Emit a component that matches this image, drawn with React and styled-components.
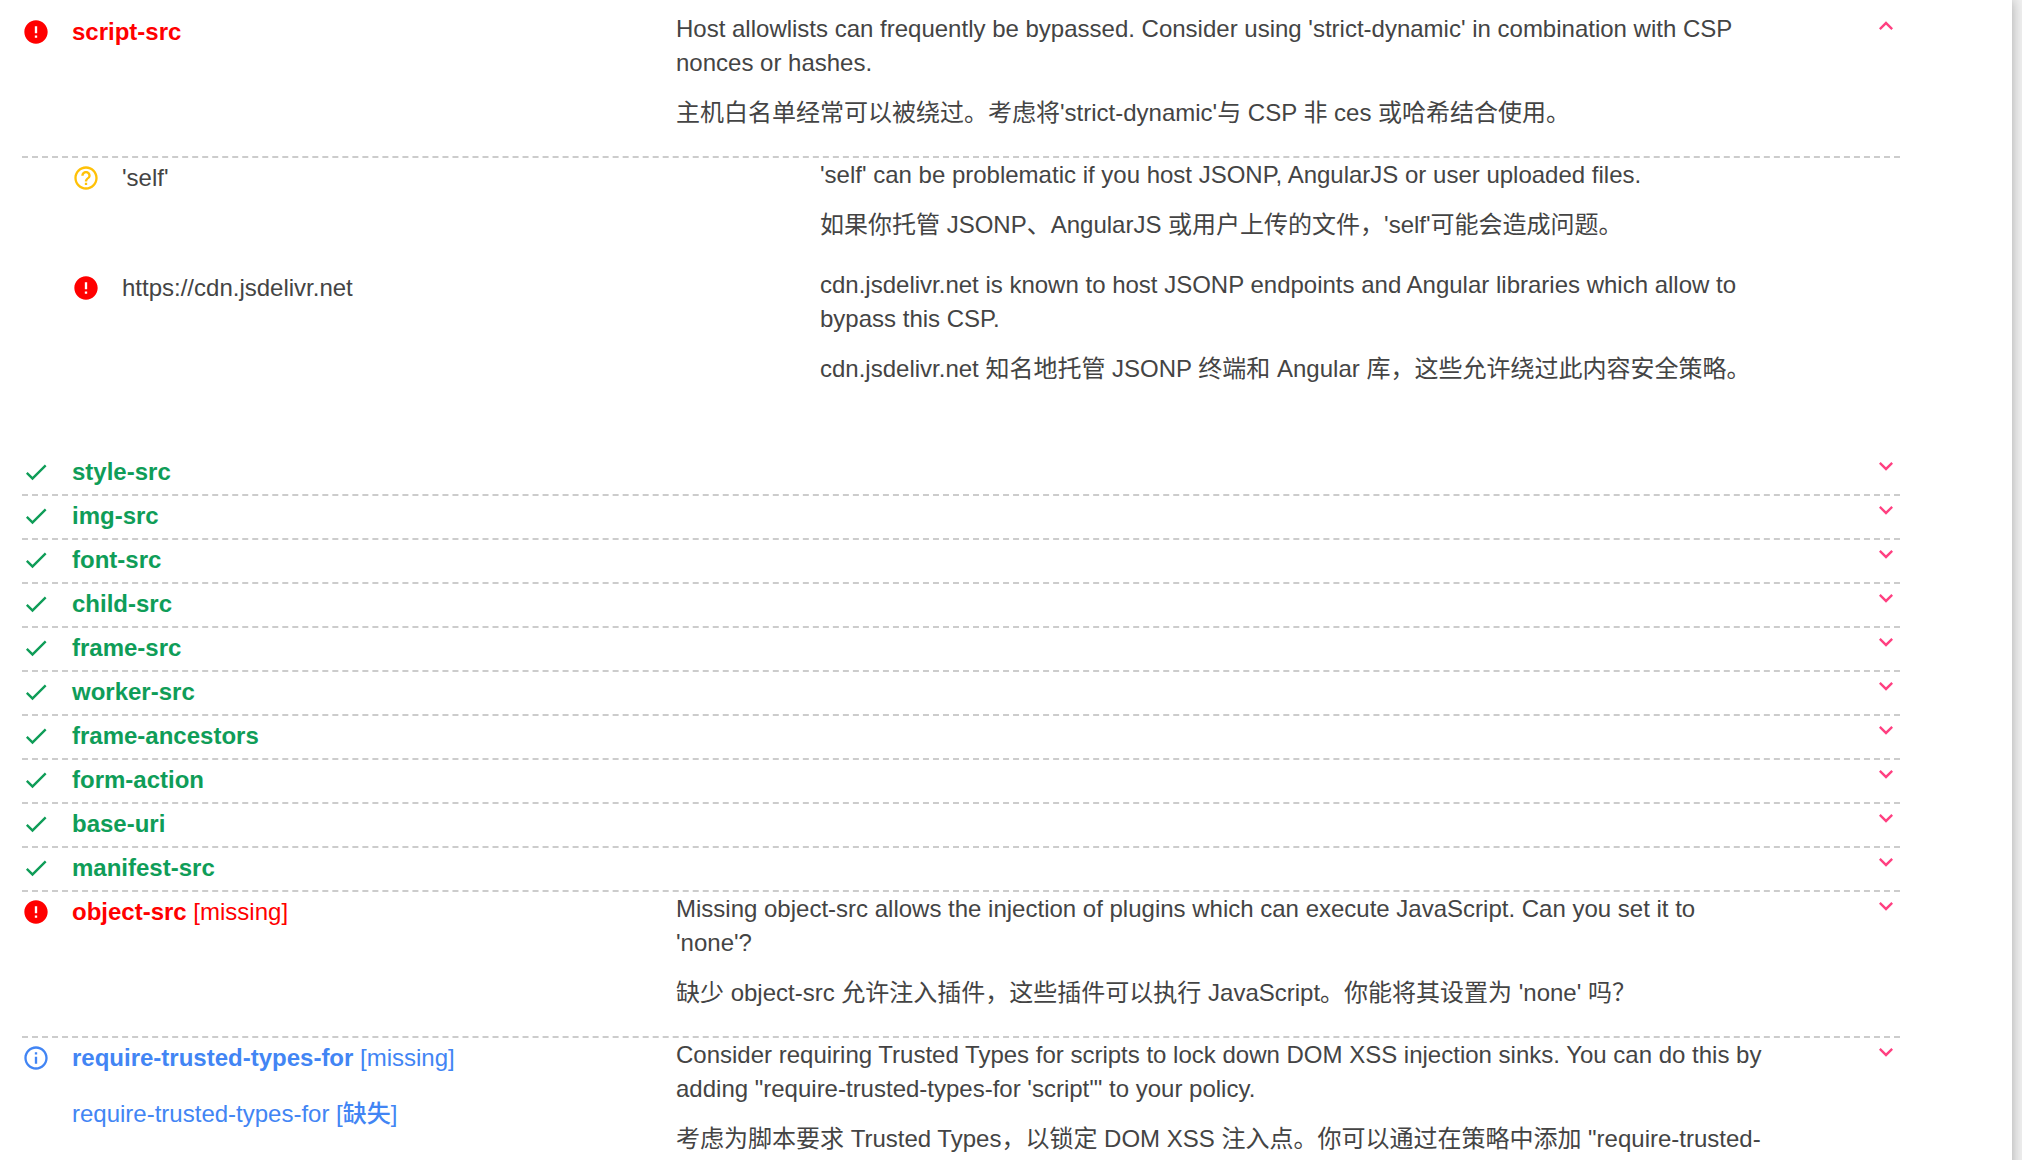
import React, { useState } from "react";
import styled, { createGlobalStyle } from "styled-components";
import {
  MdCheck,
  MdError,
  MdExpandLess,
  MdExpandMore,
  MdHelpOutline,
  MdInfoOutline,
} from "react-icons/md";

const GlobalStyle = createGlobalStyle`
  *, *::before, *::after { box-sizing: border-box; }
  html { scrollbar-width: none; }
  body {
    margin: 0;
    background: #f0f0f0;
    color: #444;
    font: 24px/34px "Liberation Sans", "Noto Sans CJK SC", sans-serif;
  }
`;

const Sheet = styled.main`
  min-height: 100vh;
  margin-right: 10px;
  padding: 12px 112px 0 22px;
  background: #fff;
  box-shadow: 0 0 12px rgba(0, 0, 0, 0.3);
`;

const List = styled.ul`
  margin: 0;
  padding: 0;
  list-style: none;
`;

const Directive = styled.li`
  display: grid;
  grid-template-columns: 654fr 1094fr 130fr;
  align-items: start;
  min-height: 44px;
  border-bottom: 2px dashed #ccc;
`;

const Details = styled(List)`
  padding: 0 0 40px 50px;
`;

const Value = styled.li`
  display: grid;
  grid-template-columns: 748fr 950fr 130fr;
  align-items: start;
`;

const tones = {
  high: "#f00",
  maybe: "#ffc107",
  ok: "#0f9d58",
  info: "#4285f4",
};

const NameCell = styled.div`
  display: flex;
  gap: 22px;
  padding-top: 3px;
  color: ${(p) => (p.$tone ? tones[p.$tone] : "inherit")};
`;

const StatusIcon = styled.span`
  display: flex;
  flex: none;
  padding-top: 3px;
  color: ${(p) => tones[p.$tone]};

  svg {
    width: 28px;
    height: 28px;
  }
`;

const Name = styled.div`
  font-weight: 400;
`;

const Translation = styled.p`
  margin: ${(p) => (p.$roomy ? "22px 0 0" : "16px 0 26px")};
  font-weight: ${(p) => (p.$roomy ? 500 : 400)};
`;

const Description = styled.div`
  grid-column: 2;
`;

const Toggle = styled.button`
  grid-column: 3;
  justify-self: end;
  display: flex;
  padding: 0;
  border: 0;
  background: none;
  color: #ff4081;
  cursor: pointer;

  svg {
    width: 28px;
    height: 28px;
  }
`;

const icons = {
  high: MdError,
  maybe: MdHelpOutline,
  ok: MdCheck,
  info: MdInfoOutline,
};

const findings = [
  {
    name: "script-src",
    tone: "high",
    text: "Host allowlists can frequently be bypassed. Consider using 'strict-dynamic' in combination with CSP nonces or hashes.",
    translation:
      "主机白名单经常可以被绕过。考虑将'strict-dynamic'与 CSP 非 ces 或哈希结合使用。",
    values: [
      {
        name: "'self'",
        tone: "maybe",
        text: "'self' can be problematic if you host JSONP, AngularJS or user uploaded files.",
        translation:
          "如果你托管 JSONP、AngularJS 或用户上传的文件，'self'可能会造成问题。",
      },
      {
        name: "https://cdn.jsdelivr.net",
        tone: "high",
        text: "cdn.jsdelivr.net is known to host JSONP endpoints and Angular libraries which allow to bypass this CSP.",
        translation:
          "cdn.jsdelivr.net 知名地托管 JSONP 终端和 Angular 库，这些允许绕过此内容安全策略。",
      },
    ],
  },
  { name: "style-src", tone: "ok" },
  { name: "img-src", tone: "ok" },
  { name: "font-src", tone: "ok" },
  { name: "child-src", tone: "ok" },
  { name: "frame-src", tone: "ok" },
  { name: "worker-src", tone: "ok" },
  { name: "frame-ancestors", tone: "ok" },
  { name: "form-action", tone: "ok" },
  { name: "base-uri", tone: "ok" },
  { name: "manifest-src", tone: "ok" },
  {
    name: "object-src",
    tone: "high",
    missing: true,
    text: "Missing object-src allows the injection of plugins which can execute JavaScript. Can you set it to 'none'?",
    translation:
      "缺少 object-src 允许注入插件，这些插件可以执行 JavaScript。你能将其设置为 'none' 吗？",
  },
  {
    name: "require-trusted-types-for",
    tone: "info",
    missing: true,
    nameTranslation: "require-trusted-types-for [缺失]",
    text: "Consider requiring Trusted Types for scripts to lock down DOM XSS injection sinks. You can do this by adding \"require-trusted-types-for 'script'\" to your policy.",
    translation:
      "考虑为脚本要求 Trusted Types，以锁定 DOM XSS 注入点。你可以通过在策略中添加 \"require-trusted-",
  },
];

function Status({ tone }) {
  const Icon = icons[tone];
  return (
    <StatusIcon $tone={tone}>
      <Icon aria-hidden="true" />
    </StatusIcon>
  );
}

function Explanation({ text, translation }) {
  if (!text) return null;
  return (
    <Description>
      {text}
      <Translation lang="zh-CN">{translation}</Translation>
    </Description>
  );
}

function Finding({ item }) {
  const [open, setOpen] = useState(Boolean(item.values));
  return (
    <>
      <Directive>
        <NameCell $tone={item.tone}>
          <Status tone={item.tone} />
          <Name>
            <strong>{item.name}</strong>
            {item.missing && " [missing]"}
            {item.nameTranslation && (
              <Translation $roomy lang="zh-CN">
                {item.nameTranslation}
              </Translation>
            )}
          </Name>
        </NameCell>
        <Explanation text={item.text} translation={item.translation} />
        <Toggle
          type="button"
          aria-label={`Toggle ${item.name}`}
          aria-expanded={open}
          onClick={() => setOpen(!open)}
        >
          {open ? <MdExpandLess /> : <MdExpandMore />}
        </Toggle>
      </Directive>
      {open && item.values && (
        <li>
          <Details>
            {item.values.map((value) => (
              <Value key={value.name}>
                <NameCell>
                  <Status tone={value.tone} />
                  <Name>{value.name}</Name>
                </NameCell>
                <Explanation text={value.text} translation={value.translation} />
              </Value>
            ))}
          </Details>
        </li>
      )}
    </>
  );
}

export default function App() {
  return (
    <>
      <GlobalStyle />
      <Sheet>
        <List>
          {findings.map((item) => (
            <Finding key={item.name} item={item} />
          ))}
        </List>
      </Sheet>
    </>
  );
}
